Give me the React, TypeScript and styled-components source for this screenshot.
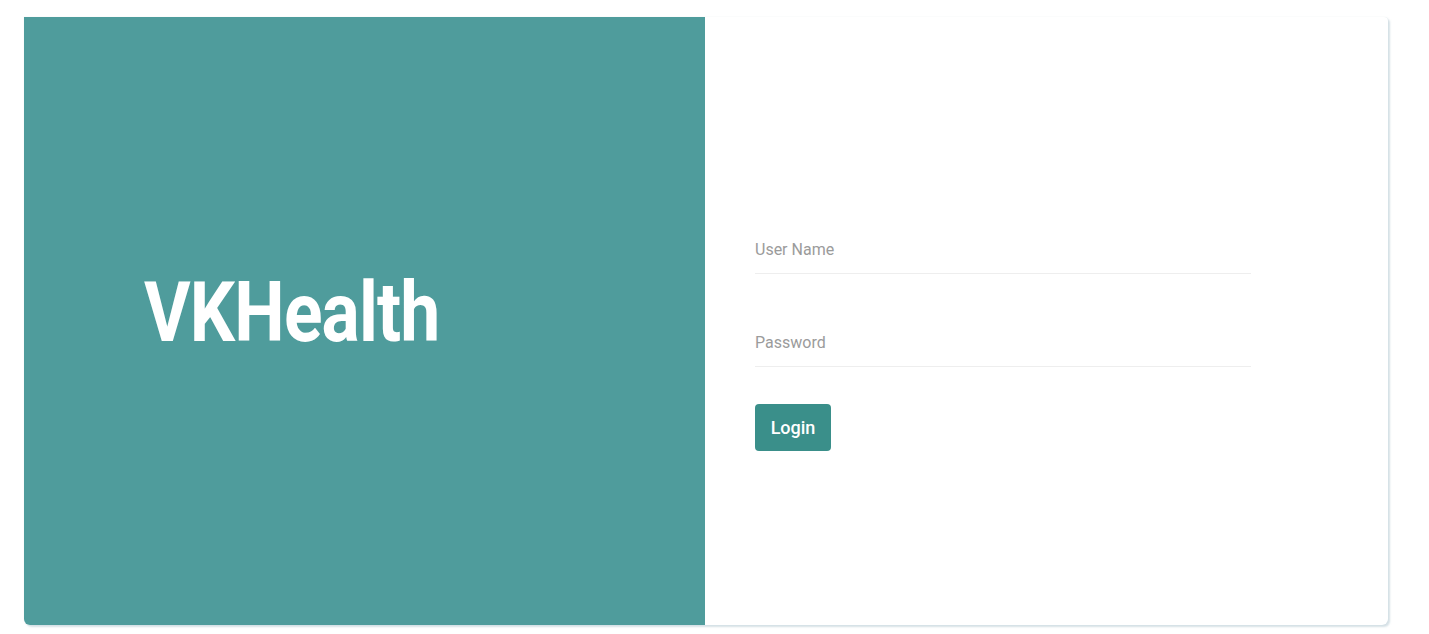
import React from "react";
import styled, { createGlobalStyle } from "styled-components";

const Global = createGlobalStyle`
  html, body { margin: 0; padding: 0; background: #ffffff; }
  body { font-family: Roboto, "Noto Sans", Arial, sans-serif; }
  * { box-sizing: border-box; }
`;

const Page = styled.div`
  width: 1429px;
  height: 634px;
  padding: 17px 41px 9px 24px;
`;

const Card = styled.div`
  display: flex;
  width: 1364px;
  height: 608px;
  border-radius: 0 4px 6px 6px;
  background: #ffffff;
  box-shadow: 2px 2px 2px rgba(180, 200, 210, 0.55), 0 0 1px rgba(180, 200, 210, 0.5);
  overflow: hidden;
`;

const Brand = styled.div`
  flex: 0 0 681px;
  background: #4f9c9c;
  display: flex;
  align-items: center;
  padding: 0 0 18px 120px;
`;

const Title = styled.h1`
  margin: 0;
  color: #ffffff;
  font-family: Roboto, sans-serif;
  font-weight: 700;
  font-size: 84px;
  letter-spacing: -1px;
  transform: scaleX(0.85);
  transform-origin: left center;
`;

const FormSide = styled.div`
  flex: 1;
  display: flex;
  flex-direction: column;
  justify-content: flex-start;
  padding: 211px 137px 0 50px;
`;

const Field = styled.div`
  display: flex;
  align-items: flex-end;
  height: 46px;
  width: 496px;
  border-bottom: 1.5px solid #eeeeee;
  padding-bottom: 14px;
  margin-bottom: 47px;
`;

const Input = styled.input`
  border: none;
  outline: none;
  padding: 0;
  width: 100%;
  font-family: Roboto, sans-serif;
  font-size: 16px;
  color: #333;
  background: transparent;
  &::placeholder { color: #9b9b9b; }
`;

const Button = styled.button`
  margin-top: -10px;
  width: 76px;
  height: 47px;
  border: none;
  border-radius: 4px;
  background: #3a8f8a;
  color: #ffffff;
  font-family: Roboto, sans-serif;
  font-weight: 500;
  font-size: 18px;
  cursor: pointer;
`;

export default function App() {
  return (
    <Page>
      <Global />
      <Card>
        <Brand>
          <Title>VKHealth</Title>
        </Brand>
        <FormSide>
          <Field>
            <Input placeholder="User Name" />
          </Field>
          <Field>
            <Input type="password" placeholder="Password" />
          </Field>
          <Button>Login</Button>
        </FormSide>
      </Card>
    </Page>
  );
}
